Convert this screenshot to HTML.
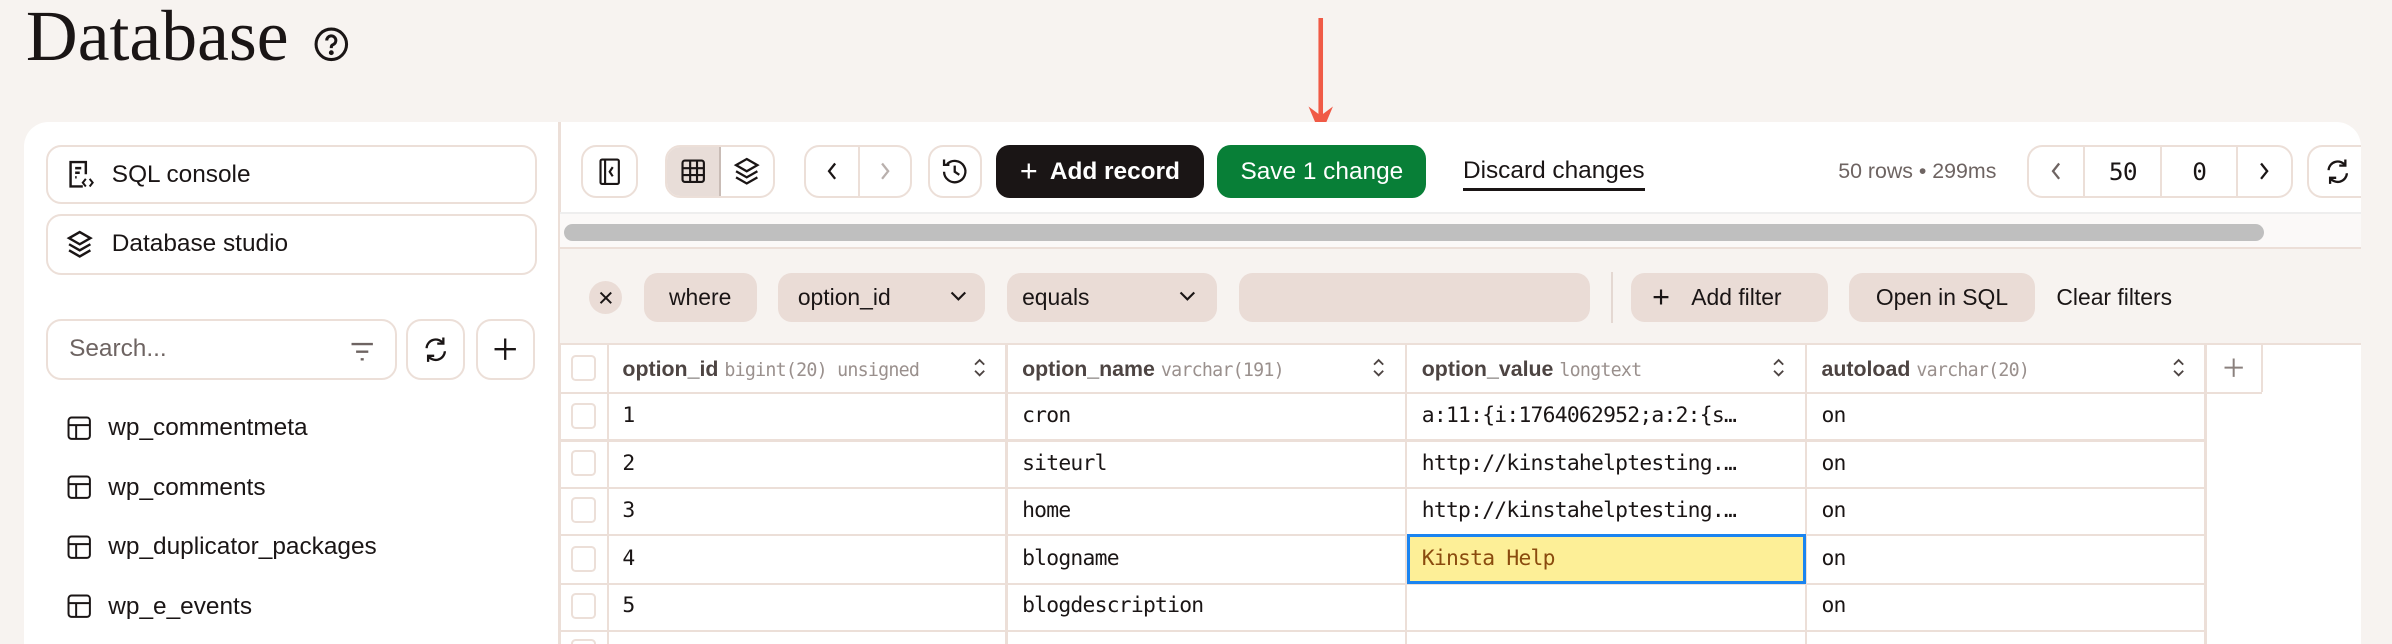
<!DOCTYPE html>
<html><head><meta charset="utf-8"><style>
*{box-sizing:border-box;margin:0;padding:0}
html,body{width:2392px;height:644px;overflow:hidden;background:#f7f3f0}
#r{zoom:1.52551;position:relative;width:1568px;height:423px;font-family:"Liberation Sans",sans-serif;color:#1a1515}
.a{position:absolute}
.btn{position:absolute;border:1.5px solid #ecdfd8;border-radius:10px;background:#fff;display:flex;align-items:center;justify-content:center}
.chip{position:absolute;background:#eadcd6;border-radius:9px;display:flex;align-items:center;font-size:15px;top:179px;height:32px}
.mono{font-family:"DejaVu Sans Mono","Liberation Mono",monospace;font-size:13px;letter-spacing:-0.5px}
.hl{position:absolute;left:368px;width:1115px;height:1.5px;background:#ecdfd8}
.vl{position:absolute;top:226px;height:197px;width:1.5px;background:#ecdfd8}
.cb{position:absolute;left:374px;width:17px;height:17px;border:1.5px solid #ecdfd8;border-radius:3px;background:#fff}
.cell{position:absolute;font-size:14px}
svg{display:block}
</style></head><body><div id="r">
<div class="a" style="left:17px;top:-3px;font-family:'Liberation Serif',serif;font-size:47px;color:#1a1515">Database</div>
<svg class="a" style="left:205px;top:17px" width="24" height="24" viewBox="0 0 24 24" fill="none" stroke="#1a1515" stroke-width="2"><circle cx="12" cy="12" r="10"/><path d="M9 9.5a3 3 0 1 1 4 2.8c-.7.3-1 .9-1 1.7v.5"/><circle cx="12" cy="17.5" r=".6" fill="#1a1515"/></svg>
<svg class="a" style="left:857px;top:12px" width="18" height="78"><line x1="9" y1="0" x2="9" y2="64" stroke="#f05a46" stroke-width="3"/><path d="M1 58 L9 77 L17 58 L9 64Z" fill="#f05a46"/></svg>
<div class="a" style="left:16px;top:80px;width:1532px;height:343px;background:#fff;border-radius:16px 16px 0 0;overflow:hidden"></div>
<div class="a" style="left:366px;top:80px;width:1.5px;height:343px;background:#ecdfd8"></div>
<!-- sidebar -->
<div class="btn" style="left:30px;top:95px;width:322px;height:39px;justify-content:flex-start;padding-left:12px;font-size:16px">
<svg width="18" height="20" viewBox="0 0 18 20" fill="none" stroke="#1a1515" stroke-width="1.6"><path d="M11 18H3V2h10v8"/><path d="M6 6h4M6 9h3M6 12h1"/><path d="M13 13l-2 2.5 2 2.5M15.5 13l2 2.5-2 2.5" stroke-width="1.3"/></svg><span style="margin-left:12px">SQL console</span></div>
<div class="btn" style="left:30px;top:140px;width:322px;height:40px;justify-content:flex-start;padding-left:12px;font-size:16px">
<svg width="18" height="20" viewBox="0 0 18 20" fill="none" stroke="#1a1515" stroke-width="1.6"><path d="M9 2l7 4-7 4-7-4z"/><path d="M2 10l7 4 7-4M2 14l7 4 7-4"/></svg><span style="margin-left:12px">Database studio</span></div>
<div class="btn" style="left:30px;top:209px;width:230px;height:40px;justify-content:flex-start;padding-left:14px;font-size:16px;color:#6e6462">Search...
<svg class="a" style="left:198px;top:13px" width="16" height="14" fill="none" stroke="#6e6462" stroke-width="1.5"><path d="M1 2h14M4 7h8M7 12h2"/></svg></div>
<div class="btn" style="left:266px;top:209px;width:39px;height:40px"><svg width="18" height="18" viewBox="0 0 18 18" fill="none" stroke="#1a1515" stroke-width="1.5"><path d="M3 8a6 6 0 0 1 11-3M15 10a6 6 0 0 1-11 3M14 1v4h-4M4 17v-4h4"/></svg></div>
<div class="btn" style="left:312px;top:209px;width:39px;height:40px"><svg width="16" height="16" stroke="#1a1515" stroke-width="1.5"><path d="M8 1v14M1 8h14"/></svg></div>
<div class="a" style="left:44px;top:261px;font-size:16px;line-height:39px">
<div style="display:flex;align-items:center"><svg width="16" height="16" fill="none" stroke="#1a1515" stroke-width="1.3"><rect x="1" y="1" width="14" height="14" rx="2"/><path d="M1 6h14M6 6v9"/></svg><span style="margin-left:11px">wp_commentmeta</span></div>
<div style="display:flex;align-items:center"><svg width="16" height="16" fill="none" stroke="#1a1515" stroke-width="1.3"><rect x="1" y="1" width="14" height="14" rx="2"/><path d="M1 6h14M6 6v9"/></svg><span style="margin-left:11px">wp_comments</span></div>
<div style="display:flex;align-items:center"><svg width="16" height="16" fill="none" stroke="#1a1515" stroke-width="1.3"><rect x="1" y="1" width="14" height="14" rx="2"/><path d="M1 6h14M6 6v9"/></svg><span style="margin-left:11px">wp_duplicator_packages</span></div>
<div style="display:flex;align-items:center"><svg width="16" height="16" fill="none" stroke="#1a1515" stroke-width="1.3"><rect x="1" y="1" width="14" height="14" rx="2"/><path d="M1 6h14M6 6v9"/></svg><span style="margin-left:11px">wp_e_events</span></div>
</div>
<!-- toolbar -->
<div class="btn" style="left:381px;top:95px;width:37px;height:35px"><svg width="14" height="18" fill="none" stroke="#1a1515" stroke-width="1.4"><rect x="1" y="1" width="12" height="16" rx="1"/><path d="M4 1v16M9 6l-2 3 2 3"/></svg></div>
<div class="btn" style="left:436px;top:95px;width:72px;height:35px;overflow:hidden;justify-content:flex-start">
<div style="width:36px;height:100%;background:#e8ddd8;display:flex;align-items:center;justify-content:center;border-right:1.5px solid #c9bcb6"><svg width="16" height="16" fill="none" stroke="#1a1515" stroke-width="1.4"><rect x="1" y="1" width="14" height="14" rx="1.5"/><path d="M1 6h14M1 10.5h14M6 1v14M10.5 1v14"/></svg></div>
<div style="width:35px;display:flex;justify-content:center"><svg width="18" height="20" viewBox="0 0 18 20" fill="none" stroke="#1a1515" stroke-width="1.5"><path d="M9 2l7 4-7 4-7-4z"/><path d="M2 10l7 4 7-4M2 14l7 4 7-4"/></svg></div></div>
<div class="btn" style="left:527px;top:95px;width:71px;height:35px;justify-content:flex-start">
<div style="width:36px;display:flex;justify-content:center;border-right:1.5px solid #ecdfd8;height:100%;align-items:center"><svg width="8" height="12" fill="none" stroke="#1a1515" stroke-width="1.5"><path d="M6 1L2 6l4 5"/></svg></div>
<div style="width:34px;display:flex;justify-content:center"><svg width="8" height="12" fill="none" stroke="#b9b0ad" stroke-width="1.5"><path d="M2 1l4 5-4 5"/></svg></div></div>
<div class="btn" style="left:608px;top:95px;width:36px;height:35px"><svg width="18" height="18" viewBox="0 0 18 18" fill="none" stroke="#1a1515" stroke-width="1.5"><path d="M2 9a7 7 0 1 0 2-5M2 1v3.5h3.5M9 5v4l3 2"/></svg></div>
<div class="a" style="left:653px;top:95px;width:136px;height:35px;background:#1a1515;border-radius:9px;color:#fff;font-size:16px;font-weight:bold;display:flex;align-items:center;justify-content:center"><span style="font-weight:normal;font-size:20px;margin-right:8px">+</span>Add record</div>
<div class="a" style="left:798px;top:95px;width:137px;height:35px;background:#087f37;border-radius:9px;color:#fff;font-size:16px;display:flex;align-items:center;justify-content:center">Save 1 change</div>
<div class="a" style="left:959px;top:103px;font-size:16px;border-bottom:2px solid #1a1515;padding-bottom:2px">Discard changes</div>
<div class="a" style="left:1205px;top:104px;font-size:14px;color:#6e6462">50 rows • 299ms</div>
<div class="btn" style="left:1329px;top:95px;width:174px;height:35px;justify-content:flex-start;font-size:16px">
<div style="width:37px;height:100%;display:flex;align-items:center;justify-content:center;border-right:1.5px solid #ecdfd8"><svg width="8" height="12" fill="none" stroke="#6e6462" stroke-width="1.5"><path d="M6 1L2 6l4 5"/></svg></div>
<div class="mono" style="font-size:16px;width:51px;height:100%;display:flex;align-items:center;justify-content:center;border-right:1.5px solid #ecdfd8">50</div>
<div class="mono" style="font-size:16px;width:50px;height:100%;display:flex;align-items:center;justify-content:center;border-right:1.5px solid #ecdfd8">0</div>
<div style="width:35px;display:flex;justify-content:center"><svg width="8" height="12" fill="none" stroke="#1a1515" stroke-width="1.5"><path d="M2 1l4 5-4 5"/></svg></div></div>
<div class="btn" style="left:1512px;top:95px;width:40px;height:35px;border-right:none;border-radius:10px 0 0 10px"><svg width="18" height="18" viewBox="0 0 18 18" fill="none" stroke="#1a1515" stroke-width="1.5"><path d="M3 8a6 6 0 0 1 11-3M15 10a6 6 0 0 1-11 3M14 1v4h-4M4 17v-4h4"/></svg></div>
<div class="a" style="left:1548px;top:80px;width:20px;height:343px;background:#f7f3f0"></div>
<!-- scrollbar -->
<div class="a" style="left:367px;top:139px;width:1181px;height:24px;background:#fbf9f8;border-top:1.5px solid #eee;border-bottom:1.5px solid #ecdfd8"></div>
<div class="a" style="left:370px;top:147px;width:1114px;height:11px;background:#bfbfbf;border-radius:6px"></div>
<!-- filter bar -->
<div class="a" style="left:367px;top:163px;width:1181px;height:63px;background:#f7f3f0;border-bottom:1.5px solid #ecdfd8"></div>
<div class="a" style="left:386px;top:184px;width:22px;height:22px;border-radius:50%;background:#eadcd6;display:flex;align-items:center;justify-content:center"><svg width="9" height="9" stroke="#1a1515" stroke-width="1.3"><path d="M1 1l7 7M8 1l-7 7"/></svg></div>
<div class="chip" style="left:422px;width:74px;justify-content:center">where</div>
<div class="chip" style="left:510px;width:136px;padding-left:13px">option_id<svg class="a" style="left:113px;top:12px" width="11" height="7" fill="none" stroke="#1a1515" stroke-width="1.4"><path d="M1 1l4.5 4.5L10 1"/></svg></div>
<div class="chip" style="left:660px;width:138px;padding-left:10px">equals<svg class="a" style="left:113px;top:12px" width="11" height="7" fill="none" stroke="#1a1515" stroke-width="1.4"><path d="M1 1l4.5 4.5L10 1"/></svg></div>
<div class="chip" style="left:812px;width:230px"></div>
<div class="a" style="left:1056px;top:178px;width:1.5px;height:34px;background:#e4d8d2"></div>
<div class="chip" style="left:1069px;width:129px;padding-left:14px"><span style="font-size:20px;margin-right:14px">+</span>Add filter</div>
<div class="chip" style="left:1212px;width:122px;justify-content:center">Open in SQL</div>
<div class="a" style="left:1348px;top:186px;font-size:15px">Clear filters</div>
<!-- table -->
<div class="hl" style="top:257px;width:1115px"></div>
<div class="hl" style="top:288px;width:1078px"></div>
<div class="hl" style="top:319px;width:1078px"></div>
<div class="hl" style="top:350px;width:1078px"></div>
<div class="hl" style="top:382px;width:1078px"></div>
<div class="hl" style="top:413px;width:1078px"></div>
<div class="vl" style="left:398px"></div>
<div class="vl" style="left:659px"></div>
<div class="vl" style="left:921px"></div>
<div class="vl" style="left:1183px"></div>
<div class="vl" style="left:1445px"></div>
<div class="vl" style="left:1482px;height:31px"></div>
<div class="cb" style="top:233px"></div><div class="cb" style="top:264px"></div><div class="cb" style="top:295px"></div><div class="cb" style="top:326px"></div><div class="cb" style="top:358px"></div><div class="cb" style="top:389px"></div><div class="cb" style="top:419px"></div>
<div class="cell" style="left:408px;top:234px;color:#4d4442;font-weight:bold">option_id <span class="mono" style="font-weight:normal;color:#9a908d;font-size:12px">bigint(20) unsigned</span></div>
<div class="cell" style="left:670px;top:234px;color:#4d4442;font-weight:bold">option_name <span class="mono" style="font-weight:normal;color:#9a908d;font-size:12px">varchar(191)</span></div>
<div class="cell" style="left:932px;top:234px;color:#4d4442;font-weight:bold">option_value <span class="mono" style="font-weight:normal;color:#9a908d;font-size:12px">longtext</span></div>
<div class="cell" style="left:1194px;top:234px;color:#4d4442;font-weight:bold">autoload <span class="mono" style="font-weight:normal;color:#9a908d;font-size:12px">varchar(20)</span></div>
<svg class="a" style="left:637px;top:234px" width="10" height="14" fill="none" stroke="#4d4442" stroke-width="1.2"><path d="M2 5l3-3 3 3M2 9l3 3 3-3"/></svg>
<svg class="a" style="left:899px;top:234px" width="10" height="14" fill="none" stroke="#4d4442" stroke-width="1.2"><path d="M2 5l3-3 3 3M2 9l3 3 3-3"/></svg>
<svg class="a" style="left:1161px;top:234px" width="10" height="14" fill="none" stroke="#4d4442" stroke-width="1.2"><path d="M2 5l3-3 3 3M2 9l3 3 3-3"/></svg>
<svg class="a" style="left:1423px;top:234px" width="10" height="14" fill="none" stroke="#4d4442" stroke-width="1.2"><path d="M2 5l3-3 3 3M2 9l3 3 3-3"/></svg>
<svg class="a" style="left:1457px;top:234px" width="14" height="14" stroke="#8a807d" stroke-width="1.3"><path d="M7 1v12M1 7h12"/></svg>
<div class="a" style="left:922px;top:350px;width:262px;height:33px;background:#fdef97;border:2.5px solid #1a84f0"></div>
<div class="mono a" style="left:408px;top:257px;line-height:31.2px;font-size:14px">1<br>2<br>3<br>4<br>5</div>
<div class="mono a" style="left:670px;top:257px;line-height:31.2px;font-size:14px">cron<br>siteurl<br>home<br>blogname<br>blogdescription</div>
<div class="mono a" style="left:932px;top:257px;line-height:31.2px;font-size:14px">a:11:{i:1764062952;a:2:{s…<br>http://kinstahelptesting.…<br>http://kinstahelptesting.…<br><span style="color:#8a4b0e">Kinsta Help</span></div>
<div class="mono a" style="left:1194px;top:257px;line-height:31.2px;font-size:14px">on<br>on<br>on<br>on<br>on</div>
</div></body></html>
